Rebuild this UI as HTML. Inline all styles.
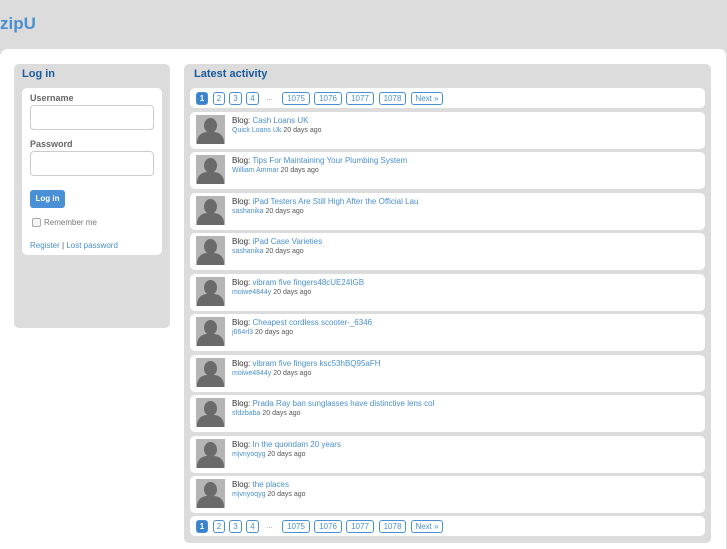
<!DOCTYPE html>
<html><head><style>
*{margin:0;padding:0;box-sizing:border-box}
body{width:727px;height:545px;background:#dcdcdc;font-family:"Liberation Sans",sans-serif;overflow:hidden;position:relative}
.a{position:absolute}
#logo{left:0;top:14px;font-size:17px;font-weight:bold;color:#4a90d0}
#main{left:0;top:49px;width:726px;height:500px;background:#fff;border-radius:8px 6px 0 0}
.box{background:#dcdcdc;border-radius:5px}
h2{font-size:11px;color:#1a5a9e;font-weight:bold}
.w{background:#fff;border-radius:5px}
label{font-size:9px;color:#666;font-weight:bold;position:absolute}
.inp{position:absolute;background:#fff;border:1px solid #ccc;border-radius:4px}
.pg{position:absolute;left:190px;width:515px;height:20px;background:#fff;border-radius:5px}
.pg span{position:absolute;top:4px;height:13px;border:1px solid #4a90d0;border-radius:3px;font-size:8px;color:#4a90d0;text-align:center;line-height:11px}
.pg span.c{background:#3a82cc;color:#fff;font-weight:bold}
.pg i{position:absolute;top:5px;left:76px;font-size:8px;color:#999;font-style:normal}
.it{position:absolute;left:190px;width:515px;height:37px;background:#fff;border-radius:5px}
.av{position:absolute;left:6px;top:3px;width:29px;height:29px;background:#b5b5b5;overflow:hidden}
.av:before{content:"";position:absolute;left:8px;top:3px;width:13px;height:15px;background:#6a6a6a;border-radius:50%}
.av:after{content:"";position:absolute;left:1px;top:17px;width:27px;height:14px;background:#6a6a6a;border-radius:10px 10px 0 0}
.t1{position:absolute;left:42px;top:4px;font-size:8px;color:#333}
.t2{position:absolute;left:42px;top:15px;font-size:7px;color:#555}
a{color:#4a90d0;text-decoration:none}
</style></head><body>
<div id="logo" class="a">zipU</div>
<div id="main" class="a"></div>
<div class="a box" style="left:14px;top:64px;width:156px;height:264px"></div>
<h2 class="a" style="left:22px;top:68px">Log in</h2>
<div class="a w" style="left:22px;top:88px;width:140px;height:167px"></div>
<label style="left:30px;top:93px">Username</label>
<div class="inp" style="left:30px;top:105px;width:124px;height:25px"></div>
<label style="left:30px;top:139px">Password</label>
<div class="inp" style="left:30px;top:151px;width:124px;height:25px"></div>
<div class="a" style="left:30px;top:190px;width:35px;height:18px;background:#4a90d6;border-radius:3px;color:#fff;font-size:8px;font-weight:bold;text-align:center;line-height:18px">Log in</div>
<div class="a" style="left:32px;top:218px;width:9px;height:9px;border:1px solid #aaa;border-radius:2px;background:#f6f6f6"></div>
<div class="a" style="left:44px;top:218px;font-size:8px;color:#777">Remember me</div>
<div class="a" style="left:30px;top:241px;font-size:8px;color:#555"><a>Register</a> | <a>Lost password</a></div>

<div class="a box" style="left:184px;top:64px;width:527px;height:479px"></div>
<h2 class="a" style="left:194px;top:68px">Latest activity</h2>

<div class="pg" style="top:88px">
<span class="c" style="left:6px;width:12px">1</span><span style="left:23px;width:12px">2</span><span style="left:39px;width:13px">3</span><span style="left:56px;width:13px">4</span><i>...</i><span style="left:92px;width:28px">1075</span><span style="left:124px;width:28px">1076</span><span style="left:156px;width:28px">1077</span><span style="left:189px;width:27px">1078</span><span style="left:221px;width:32px">Next »</span>
</div>

<div class="it" style="top:112px"><div class="av"></div><div class="t1">Blog: <a>Cash Loans UK</a></div><div class="t2"><a>Quick Loans Uk</a> 20 days ago</div></div>
<div class="it" style="top:152px"><div class="av"></div><div class="t1">Blog: <a>Tips For Maintaining Your Plumbing System</a></div><div class="t2"><a>William Ammar</a> 20 days ago</div></div>
<div class="it" style="top:193px"><div class="av"></div><div class="t1">Blog: <a>iPad Testers Are Still High After the Official Lau</a></div><div class="t2"><a>sashanika</a> 20 days ago</div></div>
<div class="it" style="top:233px"><div class="av"></div><div class="t1">Blog: <a>iPad Case Varieties</a></div><div class="t2"><a>sashanika</a> 20 days ago</div></div>
<div class="it" style="top:274px"><div class="av"></div><div class="t1">Blog: <a>vibram five fingers48cUE24IGB</a></div><div class="t2"><a>moiwe4844y</a> 20 days ago</div></div>
<div class="it" style="top:314px"><div class="av"></div><div class="t1">Blog: <a>Cheapest cordless scooter-_6346</a></div><div class="t2"><a>j664rl3</a> 20 days ago</div></div>
<div class="it" style="top:355px"><div class="av"></div><div class="t1">Blog: <a>vibram five fingers ksc53hBQ95aFH</a></div><div class="t2"><a>moiwe4844y</a> 20 days ago</div></div>
<div class="it" style="top:395px"><div class="av"></div><div class="t1">Blog: <a>Prada Ray ban sunglasses have distinctive lens col</a></div><div class="t2"><a>sfdzbaba</a> 20 days ago</div></div>
<div class="it" style="top:436px"><div class="av"></div><div class="t1">Blog: <a>In the quondam 20 years</a></div><div class="t2"><a>mjvnyoqyg</a> 20 days ago</div></div>
<div class="it" style="top:476px"><div class="av"></div><div class="t1">Blog: <a>the places</a></div><div class="t2"><a>mjvnyoqyg</a> 20 days ago</div></div>

<div class="pg" style="top:516px">
<span class="c" style="left:6px;width:12px">1</span><span style="left:23px;width:12px">2</span><span style="left:39px;width:13px">3</span><span style="left:56px;width:13px">4</span><i>...</i><span style="left:92px;width:28px">1075</span><span style="left:124px;width:28px">1076</span><span style="left:156px;width:28px">1077</span><span style="left:189px;width:27px">1078</span><span style="left:221px;width:32px">Next »</span>
</div>
</body></html>
